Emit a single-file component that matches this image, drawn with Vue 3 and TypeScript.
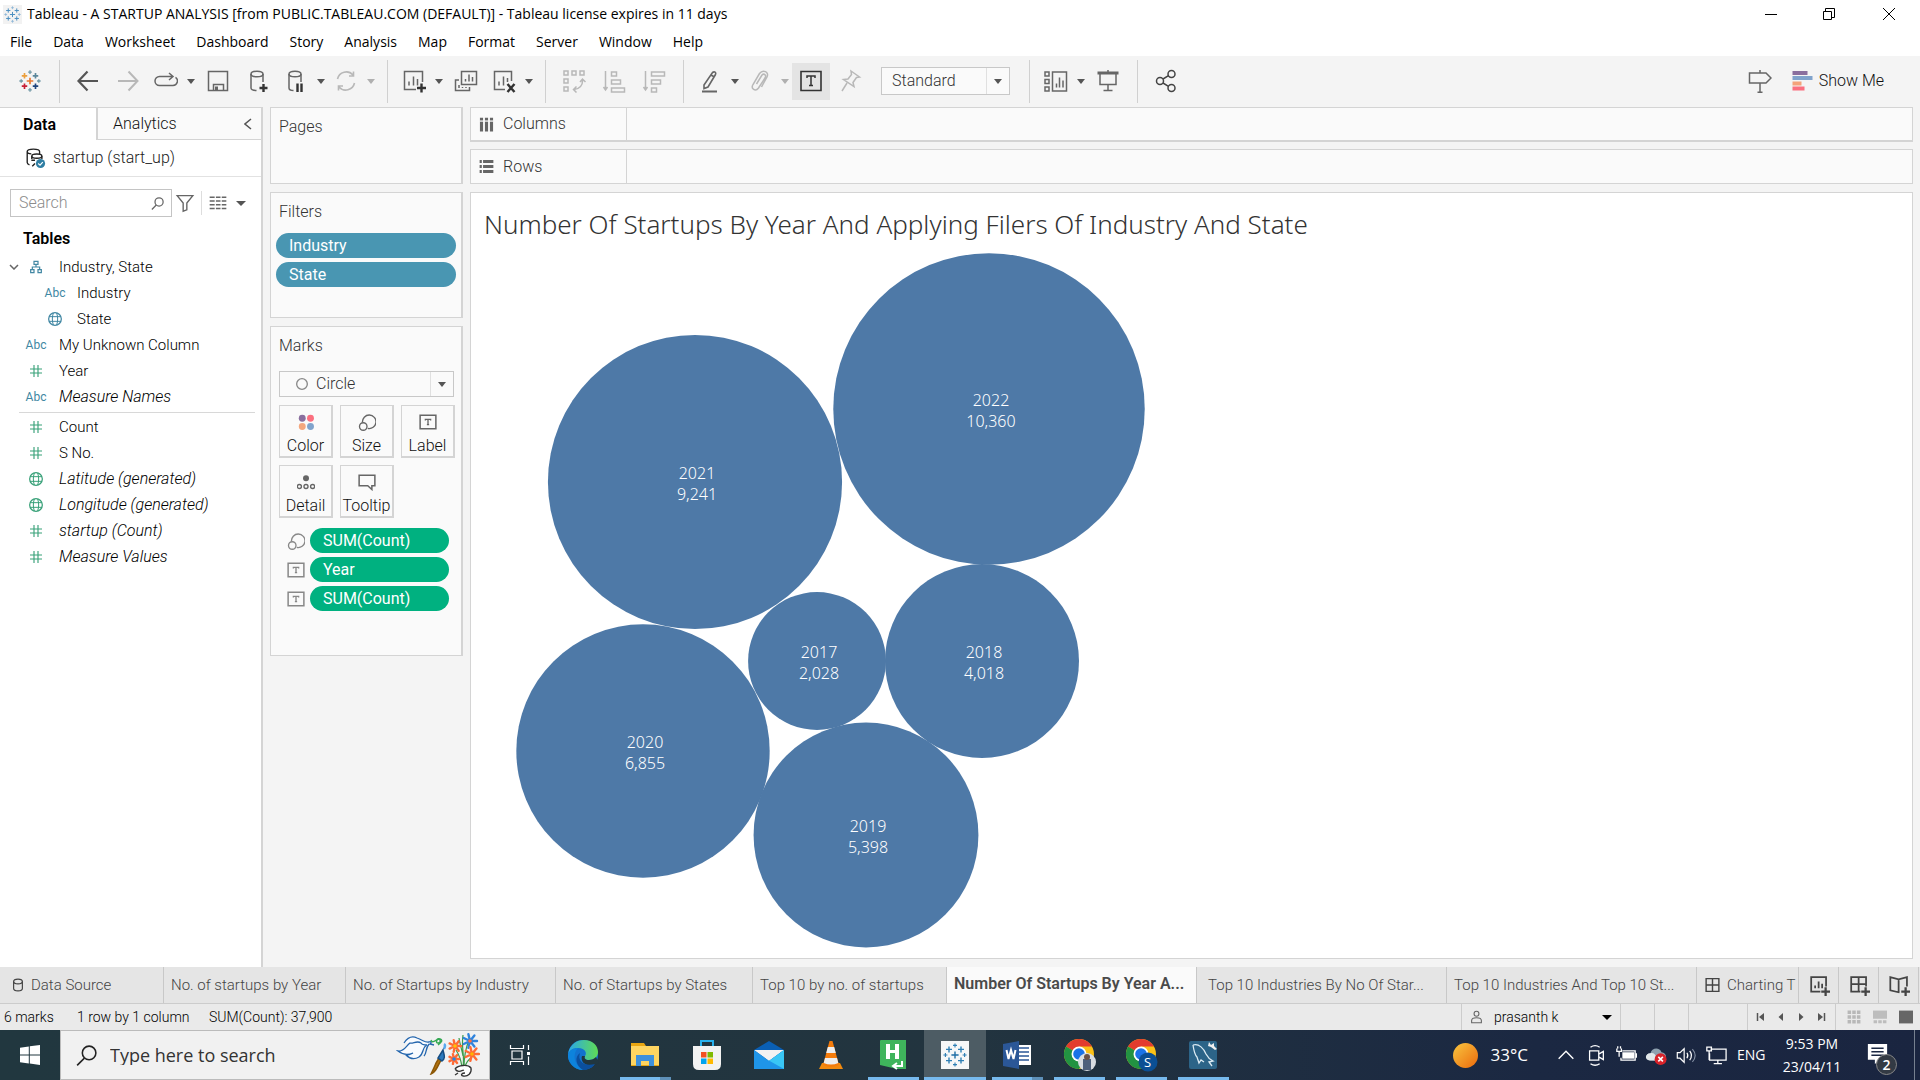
<script setup lang="ts">
import { ref } from 'vue'

interface Tool { icon: string; label: string; menu?: boolean; dim?: boolean; on?: boolean }
interface Field { icon: string; name: string; tone: 'blue' | 'green'; italic?: boolean; child?: boolean; open?: boolean }
interface Bubble { year: string; count: number; x: number; y: number }
interface Sheet { name: string; icon?: string; size: string }
interface App { icon: string; label: string; running?: boolean; stacked?: boolean; active?: boolean }

const plus = (x: number, y: number, arm: number, color: string, w = 1) =>
  `<path d="M${x - arm} ${y}H${x + arm}M${x} ${y - arm}V${y + arm}" stroke="${color}" stroke-width="${w}"/>`

const spark = (c: string[], w: number) =>
  plus(12, 12, 3.6, c[0], w) + plus(6, 6.4, 3, c[1], w) + plus(18, 6.4, 3, c[2], w) + plus(6, 17.6, 3, c[3], w) +
  plus(18, 17.6, 3, c[4], w) + plus(12, 2.4, 2, c[5], w * 0.8) + plus(12, 21.6, 2, c[5], w * 0.8) +
  plus(2.4, 12, 2, c[5], w * 0.8) + plus(21.6, 12, 2, c[5], w * 0.8)

const petals = (x: number, y: number, r: number, color: string, mid: string) => {
  let d = ''
  for (let i = 0; i < 7; i++) {
    const a = (i * Math.PI * 2) / 7
    d += `M${x} ${y}L${(x + Math.cos(a) * r).toFixed(1)} ${(y + Math.sin(a) * r).toFixed(1)}`
  }
  return `<path d="${d}" stroke="${color}" stroke-width="2.4" stroke-linecap="round"/><circle cx="${x}" cy="${y}" r="1.8" fill="${mid}" stroke="none"/>`
}

const letterT = 'M8.5 10V8.5h7V10M12 8.5v7M10.5 15.5h3'
const chrome = '<circle cx="20" cy="19" r="15" fill="#fbc116"/><path d="M20 19 7 11.500A15 15 0 0 1 33 11.500H20Z" fill="#e33b2e"/><path d="M7 11.500A15 15 0 0 0 20 34l7-11-7-4Z" fill="#229342"/><circle cx="20" cy="19" r="7.500" fill="#fff"/><circle cx="20" cy="19" r="5.800" fill="#1a73e8"/>'

const art: Record<string, string> = {
  logo: spark(['#e8762c', '#eb9f3c', '#5b879b', '#c72035', '#1f457e', '#7199a6'], 1.8),
  logoBlue: spark(['#4b8fc0', '#4b8fc0', '#4b8fc0', '#4b8fc0', '#4b8fc0', '#8ab5d6'], 1.4),
  back: '<path d="M22 12H3M11.500 2.500 2.500 12l9 9.500" stroke="#555" stroke-width="2.200"/>',
  forward: '<path d="M2 12h19M12.500 2.500 21.500 12l-9 9.500" stroke-width="2"/>',
  loop: '<path d="M9 7.500H5.500a4.500 4.500 0 0 0 0 9H19a4.500 4.500 0 0 0 2.500-8.200M9 7.500h9M15 4l4 3.500-4 3.500"/>',
  save: '<path d="M2.500 2.500h19v19h-19ZM7.500 21.500v-6h10v6"/><path d="M9 17.500h3v4H9Z" fill="currentColor" stroke="none"/>',
  dbAdd: '<ellipse cx="11" cy="5" rx="6" ry="2.800"/><path d="M5 5v14c0 1.500 2.500 2.500 5.500 2.500M17 5v8"/><path d="M17.500 15v8M13.500 19h8" stroke="#333" stroke-width="2.400"/>',
  dbPause: '<ellipse cx="11" cy="5" rx="6" ry="2.800"/><path d="M5 5v14c0 1.500 2 2.500 4.500 2.500M17 5v8"/><path d="M13.500 14.500v8.500M17.500 14.500v8.500" stroke="#333" stroke-width="2.400"/>',
  refresh: '<path d="M20.500 14A9 9 0 0 1 5 18M3.500 10A9 9 0 0 1 19 6M19.500 2.500V7H15M4.500 21.500V17H9" stroke-width="1.600"/>',
  sheetAdd: '<path d="M14 20.500H2.500v-18h18V13M7 16.500v-4M11.500 16.500v-9M15.500 16.500V10"/><path d="M19.500 14.500v9M15 19h9" stroke="#333" stroke-width="2.400"/>',
  sheetCopy: '<path d="M7.500 2.500h15v13h-15ZM11.500 12.500V10M15 12.500V5.500M18.500 12.500V8M5 11H1.500v10.500h14V18M5 19v-3M8.500 19v-1M12 19v-1"/>',
  sheetClear: '<path d="M13 20.500H2.500v-18h17V12M7 16.500v-4M11.500 16.500v-9M15.500 13V9"/><path d="m15.500 15 7 8M22.500 15l-7 8" stroke="#333" stroke-width="2.400"/>',
  swap: '<path d="M2 2h4v4H2ZM10 2h4v4h-4ZM18 2h4v4h-4ZM2 10h4v4H2ZM2 18h4v4H2ZM20.500 10.500c.500 6-3 9.500-8.500 10M18 13l2.500-3 3 3M14.500 17.500l-3 3 3 3"/>',
  sortAsc: '<path d="M3.500 2v19M1.500 18l2 3 2-3M9.500 3h5v4h-5ZM9.500 11h9v4h-9ZM9.500 19h13v4h-13Z"/>',
  sortDesc: '<path d="M3.500 2v19M1.500 18l2 3 2-3M9.500 3h13v4h-13ZM9.500 11h9v4h-9ZM9.500 19h5v4h-5Z"/>',
  pen: '<path d="M6 16 14.500 3.500c2-1.500 4 0 3 2L10 18l-4 1.500ZM13 6l3.500 2" stroke-width="1.600"/><path d="M4 22.500h15" stroke-width="2"/>',
  clip: '<path d="m8.500 15 5.500-9c2-2 4.500 0 3.300 2.500L10.500 19c-3 4-8 1-5.500-3.500L11.500 4.500C15 0 21.500 3 19 8l-5.500 10"/>',
  label: '<path d="M2 2.500h20v19H2Z" stroke="#333" stroke-width="1.600"/><path d="M8 9V7h8v2M12 7v9.500M10 16.500h4" stroke="#333" stroke-width="1.500"/>',
  pin: '<path d="m13 2 8.500 6-3 .500-3.500 5 1 4-10.500-7 4.500-.500 3.500-4.500ZM9 14l-5 8"/>',
  cards: '<path d="M1 3h4v4H1ZM1 10.500h4v4H1ZM1 18h4v4H1ZM8.500 3h14v19h-14ZM12.500 18.500v-4M15.500 18.500v-10M19 18.500v-7"/>',
  present: '<path d="M4 5v10.500h16V5M12 1v3M12 15.500V21M7.500 21.500h9"/><path d="M1.500 4h21" stroke-width="3"/>',
  share: '<g stroke="#444"><circle cx="6" cy="12" r="3.500"/><circle cx="17.500" cy="5" r="3.500"/><circle cx="17.500" cy="19" r="3.500"/><path d="m9 10 5.500-3.300M9 14l5.500 3.300"/></g>',
  guide: '<path d="M12 1v2.500M12 14v9M9.500 23.200h5M1.500 4H18l5 5-5 5H1.500Z"/>',
  bars: '<g stroke="none"><path d="M1.500 2h15v4h-15Z" fill="#8a6f9e"/><path d="M1.500 7h20v4h-20Z" fill="#80a3cc"/><path d="M1.500 12.500h9v4h-9Z" fill="#f4a27a"/><path d="M1.500 17.500h12v4h-12Z" fill="#fb6f7f"/></g>',
  source: '<path d="M17 8V5c0-3.500-13.500-3.500-13.500 0v12c0 1.500 1 2 2.500 2.500M3.500 5c0 2 3 2.500 4.500 2.500"/><ellipse cx="14" cy="10" rx="5.500" ry="2.300"/><path d="M8.500 10v3M19.500 10v3M8 14.500h4M12 18l-3 3" /><circle cx="18" cy="18" r="5" fill="#2f7ea3" stroke="none"/><path d="m15.500 18 2 1.800 3-3.300" stroke="#fff" stroke-width="1.300"/>',
  search: '<circle cx="14.500" cy="9.500" r="6.500"/><path d="M10 14.500 3 21.500"/>',
  funnel: '<path d="M3.500 4h17L14 12v7.500l-4 1.500v-9Z"/>',
  list: '<path d="M2 5h6M2 9.500h6M2 14h6M2 18.500h6M9.500 5h5.500M9.500 9.500h5.500M9.500 14h5.500M9.500 18.500h5.500M16.500 5H22M16.500 9.500H22M16.500 14H22M16.500 18.500H22" stroke-width="1.800"/>',
  hierarchy: '<path d="M9 3.500h6v4.500H9ZM4 16h5v4.500H4ZM15 16h5v4.500h-5ZM12 8v4M6.500 16v-4h11v4" stroke-width="1.800"/>',
  hash: '<path d="M9 3v18M15 3v18M3 9h18M3 15h18" stroke-width="1.700"/>',
  globe: '<circle cx="12" cy="12" r="9.500" stroke-width="1.900"/><path d="M9.500 3C7.500 9 7.500 15 9.500 21M14.500 3c2 6 2 12 0 18M3 8.500h18M3 15.500h18" stroke-width="1.500"/>',
  circle: '<circle cx="12" cy="12" r="8"/>',
  color: '<g stroke="none"><circle cx="7" cy="7" r="4.600" fill="#8a6f9e"/><circle cx="18" cy="7" r="4.600" fill="#fb6f7f"/><circle cx="7" cy="18" r="4.600" fill="#f4a77e"/><circle cx="18" cy="18" r="4.600" fill="#80a3cc"/></g>',
  size: '<path d="M6 12.500a9 9 0 1 1 7 8"/><circle cx="7" cy="18" r="5"/>',
  text: `<path d="M1.500 3h21v18h-21Z" stroke-width="2"/><path d="${letterT}" stroke-width="1.800"/>`,
  detail: '<circle cx="12" cy="7" r="4" fill="currentColor" stroke="none"/><circle cx="3.200" cy="18" r="2.700"/><circle cx="12" cy="18" r="2.700"/><circle cx="20.800" cy="18" r="2.700"/>',
  tooltip: '<path d="M1.500 3h21v14h-4v5L13 17H1.500Z" stroke-width="2"/>',
  columns: '<path d="M4 1v22M12 1v22M20 1v22" stroke-width="5"/><path d="M1 6.500h22" stroke="#fafafa" stroke-width="2"/>',
  rows: '<path d="M1 4h22M1 12h22M1 20h22" stroke-width="5"/><path d="M5.500 1v22" stroke="#fafafa" stroke-width="2"/>',
  cylinder: '<ellipse cx="12" cy="6" rx="7.500" ry="4"/><path d="M4.500 6v12c0 5.500 15 5.500 15 0V6"/>',
  grid: '<path d="M3 3h18v18H3ZM12 3v18M3 12h18"/>',
  tabSheet: '<path d="M13 19H2.500V2.500h17V13M7 15v-3M11 15V7.500M15 15v-5"/><path d="M19 14v10M14 19h10" stroke-width="2.600"/>',
  tabDash: '<path d="M13 19H2.500V2.500h17V13M11 2.500V19M2.500 10.500h17"/><path d="M19 14v10M14 19h10" stroke-width="2.600"/>',
  tabStory: '<path d="M12 20 1.500 17.500v-15L11 5l9.500-2.500V13M11 5v14.500"/><path d="M19 14v10M14 19h10" stroke-width="2.600"/>',
  person: '<circle cx="12" cy="6" r="4.500"/><path d="M3 22.500v-4c0-7 18-7 18 0v4Z"/>',
  first: '<path d="M5 4v16" stroke-width="3"/><path d="M18 4v16L8 12Z" fill="currentColor" stroke="none"/>',
  prev: '<path d="M16 4v16L7 12Z" fill="currentColor" stroke="none"/>',
  next: '<path d="M8 4v16l9-8Z" fill="currentColor" stroke="none"/>',
  last: '<path d="M19 4v16" stroke-width="3"/><path d="M6 4v16l10-8Z" fill="currentColor" stroke="none"/>',
  viewGrid: '<path d="M1 4h22M1 12h22M1 20h22" stroke="#b8b8b8" stroke-width="6" stroke-dasharray="6 2"/>',
  viewStrip: '<path d="M0 1h24v14H0Z" fill="#bdbdbd" stroke="none"/><path d="M1 20h22" stroke="#bdbdbd" stroke-width="5" stroke-dasharray="6 2"/>',
  viewFull: '<path d="M0 1h24v22H0Z" fill="#666" stroke="none"/>',
  windows: '<path d="m2 4.800 8.800-1.300v8H2ZM11.800 3.300 22 2v9.500H11.800ZM2 12.500h8.800v8L2 19.200ZM11.800 12.500H22V22l-10.200-1.400Z" fill="#fff" stroke="none"/>',
  taskview: '<path d="M2.500 2v3.500h13V2M4 8h10v8H4ZM2.500 22v-3.500h13V22M20.500 2v5M20.500 13.500V22" stroke="#fff" stroke-width="1.200"/><path d="M19 9h3v3h-3Z" fill="#fff" stroke="none"/>',
  doodle: '<path d="M2 19c6 1 8-5 12-8 3 1 7-3 11 0 1 2 3 2 6 2-5 2-3 9-8 12-5 3-10 1-13-2 4 0 5-1 7-2-5 2-10 2-15-2ZM8 11c4-6 9-7 13-5 6 2 8 5 12 4 2-1 3 1 1 2l4 1M33 12c-4 5-2 9-5 12" stroke="#2466ae" stroke-width="1.300" fill="#f8fbff"/><path d="M35 8c1 4 5 0 7-1 3 0 3 4 0 4s-1-5 2-4 2 3-2 6" stroke="#34a853" stroke-width="1.400"/><path d="M48 12c2 1 1 3 0 5" stroke="#59a9ef" stroke-width="2.500"/><path d="m46 21-6 10c-1 3-4 9-5 11 4-1 6-6 10-14Z" fill="#b5730d" stroke="#8c5807"/><path d="m47 18-5 8 4 3c4-3 2-6 1-11Z" fill="#2b79bd" stroke="#154d84"/><path d="M67 3c-2 14 2 20 0 32M60 18c4 6 5 10 6 17M77 24c-4 3-7 6-8 11M73 8c-4 10-5 18-5 27M63 6c1 7 3 12 4 18" stroke="#3d9c4a" stroke-width="1.200"/>' +
    petals(74, 9, 7, '#2f83dd', '#ff7043') + petals(59, 14, 6, '#ff6b35', '#ffc107') + petals(76, 22, 7, '#ff6b35', '#ffb300') + petals(58, 27, 5, '#ff6b35', '#2f83dd') +
    '<path d="M59 37c3-4 13-5 16-1 1 5-3 9-8 8-3-1-1-3 2-3M59 37c3 4 6 2 9 1M62 41l-3 2" stroke="#333" stroke-width="1.300" fill="#fff"/>',
  edge: '<defs><linearGradient id="eg" x1="0" x2="1"><stop stop-color="#2aa7e8"/><stop offset="1" stop-color="#5fdc55"/></linearGradient></defs><circle cx="20" cy="20" r="15" fill="#1272cf"/><path d="M5 19C7 9 14 5 21 5c9 0 14 6 14 12 0 5-4 8-9 8-4 0-5-2-4-4 2-2 1-8-7-8-5 0-8 2-10 6Z" fill="url(#eg)"/><path d="M15 13c-6 6-4 17 5 22-9 0-16-8-15-16 2-4 6-6 10-6Z" fill="#0d83dc"/><path d="M22 21c-1 2 0 4 4 4 3 0 5-1 7-3l3 6-4 2c-9 2-15-3-13-9Z" fill="#21363f"/><path d="M17 18c-3 8 4 14 15 11-3 4-8 6-12 6-7-4-9-13-3-17Z" fill="#0b4f9e"/>',
  explorer: '<path d="M6 8h13l2 3h13v20H6Z" fill="#e9a612"/><path d="M6 11h28v19H6Z" fill="#ffd561"/><path d="M11 31V20h18v11h-5v-5h-8v5Z" fill="#3e90dc"/>',
  store: '<path d="M14 12V6h12v6" fill="none" stroke="#27b1ee" stroke-width="2"/><path d="M6 11h28v18q0 6-6 6H12q-6 0-6-6Z" fill="#f2f2f2"/><path d="M14 17h5.500v5.500H14Z" fill="#f25022"/><path d="M20.500 17H26v5.500h-5.500Z" fill="#7fba00"/><path d="M14 23.500h5.500V29H14Z" fill="#00a4ef"/><path d="M20.500 23.500H26V29h-5.500Z" fill="#ffb900"/>',
  mail: '<path d="M5 15 20 6l15 9v19H5Z" fill="#0a5fb4"/><path d="M5 15h30L20 26Z" fill="#f2f2f2"/><path d="m5 15 15 11 15-11v19H5Z" fill="#1f95e8"/><path d="M35 15v19L18 24.500l2 1.500Z" fill="#39c6f5"/>',
  vlc: '<path d="M11 28h18l3 6H8Z" fill="#f28a0f"/><path d="M18.500 6h3l6.500 24q-8 4-16 0Z" fill="#f57c0b"/><path d="m16.800 12-1.600 6h9.600l-1.600-6Zm-2.800 11-1.300 5q7.300 3 14.600 0L26 23Z" fill="#eee"/>',
  heidi: '<path d="M7 6q0-1 1-1h25v29h-9L7 30Z" fill="#3fb45c"/><path d="M13 9h4v6h5V9h4v15h-4v-6h-5v6h-4Z" fill="#fff"/><path d="M29 26v5h-8m3-3-4 3 4 3" fill="none" stroke="#fff" stroke-width="2"/>',
  tableau: `<path d="M6 6h28v28H6Z" fill="#f5f7f8"/><g transform="translate(8 8)" fill="none">${spark(['#1f6ea5', '#2e7fb4', '#2e7fb4', '#2e7fb4', '#2e7fb4', '#2e7fb4'], 1.4)}</g>`,
  word: '<path d="M20 10h14v20H20Z" fill="#fff"/><path d="M22 13h10M22 17h10M22 21h10M22 25h10" stroke="#2b5797" stroke-width="1.600"/><path d="m6 9 16-3v28L6 31Z" fill="#2b5797"/><path d="m9.500 15 2 9 2.500-9 2.500 9 2-9" fill="none" stroke="#fff" stroke-width="2"/>',
  chromeA: `${chrome}<circle cx="28" cy="27" r="9" fill="#d8dde2"/><path d="M24 35V24h8v11Z" fill="#4e617c"/><circle cx="28" cy="22" r="3" fill="#6b5348"/>`,
  chromeB: `${chrome}<circle cx="27" cy="27" r="9.500" fill="#0b4f94"/>`,
  mysql: '<path d="M6 8q0-2 2-2h24q2 0 2 2v24q0 2-2 2H8q-2 0-2-2Z" fill="#2c6488"/><path d="M10 10c6-2 11 4 13 9 2 4 3 5 7 7l-4 1 3 4M10 10c1 7 2 10 4 12l2 6 2-3 3 2" fill="none" stroke="#dcebf3" stroke-width="1.300"/><path d="m26 7 2 3 3-2 0 3 3 3-2 1-4-3-3-1Z" fill="#eee"/>',
  chevron: '<path d="m4 16 8-8 8 8" stroke-width="1.500"/>',
  meet: '<path d="M5 7.500h10v10H5ZM15 11l5-3v9l-5-3M6 3.500c3-2 7-2 10 0M6 21.500c3 2 7 2 10 0" stroke-width="1.400"/>',
  battery: '<path d="M8 7.500h14v10H6.500V15M23.500 10v5M2 5v3h5V5M3 2.500V5M6 2.500V5M4.500 8v6" stroke-width="1.400"/><path d="M8 9h13v7H8Z" fill="#fff" stroke="none"/>',
  cloud: '<path d="M6 18c-6-1-6-8 0-8 1-6 10-7 12-1 6 0 7 9 0 9Z" fill="#8fa1af" stroke="none"/><path d="M5 18c-6-1-5-8 1-8 4-1 8 3 5 8Z" fill="#e2e7ea" stroke="none"/><circle cx="17" cy="16.500" r="6.500" fill="#d8232a" stroke="none"/><path d="m14.500 14 5 5m0-5-5 5" stroke="#fff" stroke-width="1.700"/>',
  sound: '<path d="M2.500 9.500h3L10 5v15l-4.500-4.500h-3ZM13 9.500q2 3 0 6M16 7.500q4 5 0 10" stroke-width="1.300"/><path d="M19 5.500q6 7 0 14" stroke="#8591a4" stroke-width="1.200"/>',
  monitor: '<path d="M6 5.500h17v12H5V10M14 17.500v4M9.500 21.500h9M2 3.500h5v4H2ZM4.500 7.500v10" stroke-width="1.400"/>',
  note: '<path d="M1 1h22v18h-8l-6 5v-5H1Z" fill="#fff" stroke="none"/><path d="M5 6h14M5 10h14M5 14h14" stroke="#1b2742" stroke-width="1.600"/>',
}

const menus = ['File', 'Data', 'Worksheet', 'Dashboard', 'Story', 'Analysis', 'Map', 'Format', 'Server', 'Window', 'Help']

const groups: Tool[][] = [
  [
    { icon: 'back', label: 'Undo' }, { icon: 'forward', label: 'Redo', dim: true }, { icon: 'loop', label: 'Replay', menu: true },
    { icon: 'save', label: 'Save' }, { icon: 'dbAdd', label: 'New data source' }, { icon: 'dbPause', label: 'Pause updates', menu: true },
    { icon: 'refresh', label: 'Run update', menu: true, dim: true },
  ],
  [{ icon: 'sheetAdd', label: 'New worksheet', menu: true }, { icon: 'sheetCopy', label: 'Duplicate' }, { icon: 'sheetClear', label: 'Clear sheet', menu: true }],
  [{ icon: 'swap', label: 'Swap', dim: true }, { icon: 'sortAsc', label: 'Sort ascending', dim: true }, { icon: 'sortDesc', label: 'Sort descending', dim: true }],
  [{ icon: 'pen', label: 'Highlight', menu: true }, { icon: 'clip', label: 'Group', menu: true, dim: true }, { icon: 'label', label: 'Show mark labels', on: true }, { icon: 'pin', label: 'Fix axes', dim: true }],
  [{ icon: 'cards', label: 'Show cards', menu: true }, { icon: 'present', label: 'Presentation mode' }],
  [{ icon: 'share', label: 'Share' }],
]

const dimensions: Field[] = [
  { icon: 'hierarchy', name: 'Industry, State', tone: 'blue', open: true },
  { icon: 'abc', name: 'Industry', tone: 'blue', child: true },
  { icon: 'globe', name: 'State', tone: 'blue', child: true },
  { icon: 'abc', name: 'My Unknown Column', tone: 'blue' },
  { icon: 'hash', name: 'Year', tone: 'green' },
  { icon: 'abc', name: 'Measure Names', tone: 'blue', italic: true },
]
const measures: Field[] = [
  { icon: 'hash', name: 'Count', tone: 'green' },
  { icon: 'hash', name: 'S No.', tone: 'green' },
  { icon: 'globe', name: 'Latitude (generated)', tone: 'green', italic: true },
  { icon: 'globe', name: 'Longitude (generated)', tone: 'green', italic: true },
  { icon: 'hash', name: 'startup (Count)', tone: 'green', italic: true },
  { icon: 'hash', name: 'Measure Values', tone: 'green', italic: true },
]

const filters = ['Industry', 'State']
const markCards = [['color', 'Color'], ['size', 'Size'], ['text', 'Label'], ['detail', 'Detail'], ['tooltip', 'Tooltip']]
const encodings = [['size', 'SUM(Count)'], ['text', 'Year'], ['text', 'SUM(Count)']]

const bubbles: Bubble[] = [
  { year: '2022', count: 10360, x: 518, y: 165 },
  { year: '2021', count: 9241, x: 224, y: 238 },
  { year: '2018', count: 4018, x: 511, y: 417 },
  { year: '2017', count: 2028, x: 346, y: 417 },
  { year: '2020', count: 6855, x: 172, y: 507 },
  { year: '2019', count: 5398, x: 395, y: 591 },
]
const radius = (count: number) => Math.sqrt(count) * 1.53

const sheets: Sheet[] = [
  { name: 'Data Source', icon: 'cylinder', size: 'w163' },
  { name: 'No. of startups by Year', size: 'w182' },
  { name: 'No. of Startups by Industry', size: 'w210' },
  { name: 'No. of Startups by States', size: 'w197' },
  { name: 'Top 10 by no. of startups', size: 'w194' },
  { name: 'Number Of Startups By Year A...', size: 'w250' },
  { name: 'Top 10 Industries By No Of Star...', size: 'w250' },
  { name: 'Top 10 Industries And Top 10 St...', size: 'w250' },
  { name: 'Charting T', icon: 'grid', size: 'rest' },
]
const current = ref(5)

const apps: App[] = [
  { icon: 'edge', label: 'Edge' },
  { icon: 'explorer', label: 'File Explorer', running: true, stacked: true },
  { icon: 'store', label: 'Store' },
  { icon: 'mail', label: 'Mail' },
  { icon: 'vlc', label: 'VLC' },
  { icon: 'heidi', label: 'HeidiSQL', running: true },
  { icon: 'tableau', label: 'Tableau', running: true, active: true },
  { icon: 'word', label: 'Word', running: true, stacked: true },
  { icon: 'chromeA', label: 'Chrome', running: true },
  { icon: 'chromeB', label: 'Chrome profile S', running: true },
  { icon: 'mysql', label: 'MySQL Workbench', running: true },
]
const tray = ['chevron', 'meet', 'battery', 'cloud', 'sound', 'monitor']
const fit = ref('Standard')
const markType = ref('Circle')
const query = ref('')
const webQuery = ref('')
</script>

<template>
  <div class="desktop">
    <header class="titlebar">
      <svg class="app-icon" viewBox="0 0 24 24" v-html="art.logoBlue" />
      <h1>Tableau - A STARTUP ANALYSIS [from PUBLIC.TABLEAU.COM (DEFAULT)] - Tableau license expires in 11 days</h1>
      <div class="window-controls">
        <button aria-label="Minimize"><svg viewBox="0 0 12 12"><path d="M0 6.500h12" /></svg></button>
        <button aria-label="Restore"><svg viewBox="0 0 12 12"><path d="M.5 3.500h8v8h-8ZM2.500 3V.5h9v9H9" /></svg></button>
        <button aria-label="Close"><svg viewBox="0 0 12 12"><path d="m0 0 12 12M12 0 0 12" /></svg></button>
      </div>
    </header>

    <nav class="menubar">
      <button v-for="m in menus" :key="m">{{ m }}</button>
    </nav>

    <div class="toolbar">
      <button class="start" aria-label="Start page"><svg class="icon" viewBox="0 0 24 24" v-html="art.logo" /></button>
      <div v-for="(g, gi) in groups" :key="gi" class="group">
        <button v-for="t in g" :key="t.icon" class="tool" :class="{ split: t.menu, dim: t.dim, on: t.on }" :aria-label="t.label">
          <svg class="icon" viewBox="0 0 24 24" v-html="art[t.icon]" />
          <i v-if="t.menu" class="caret" />
        </button>
        <div v-if="gi === 3" class="picker fit">
          <select v-model="fit" aria-label="Fit"><option>Standard</option></select>
          <span class="drop"><i class="caret" /></span>
        </div>
      </div>
      <div class="spacer" />
      <button class="tool" aria-label="Data guide"><svg class="icon" viewBox="0 0 24 24" v-html="art.guide" /></button>
      <button class="show-me"><svg class="icon" viewBox="0 0 24 24" v-html="art.bars" />Show Me</button>
    </div>

    <main class="workspace">
      <aside class="data-pane">
        <div class="pane-tabs">
          <button class="selected">Data</button>
          <button class="other">Analytics</button>
          <button class="collapse" aria-label="Collapse"><svg viewBox="0 0 8 12"><path d="M7 1 1 6l6 5" /></svg></button>
        </div>
        <div class="datasource"><svg viewBox="0 0 24 24" v-html="art.source" />startup (start_up)</div>
        <div class="search-row">
          <label class="search">
            <input v-model="query" type="text" placeholder="Search" aria-label="Search fields">
            <svg viewBox="0 0 24 24" v-html="art.search" />
          </label>
          <button class="filter" aria-label="Filter"><svg viewBox="0 0 24 24" v-html="art.funnel" /></button>
          <button class="view" aria-label="View"><svg viewBox="0 0 24 24" v-html="art.list" /><i class="caret" /></button>
        </div>
        <h2>Tables</h2>
        <ul v-for="(list, li) in [dimensions, measures]" :key="li" class="fields">
          <li v-for="f in list" :key="f.name" :class="[f.tone, { italic: f.italic, child: f.child }]">
            <span class="twist"><svg v-if="f.open" viewBox="0 0 10 6"><path d="m1 1 4 4 4-4" /></svg></span>
            <span v-if="f.icon === 'abc'" class="abc">Abc</span>
            <span v-else class="glyph"><svg viewBox="0 0 24 24" v-html="art[f.icon]" /></span>
            <span>{{ f.name }}</span>
          </li>
        </ul>
      </aside>

      <section class="cards">
        <div class="card pages"><h3>Pages</h3></div>
        <div class="card filters">
          <h3>Filters</h3>
          <button v-for="f in filters" :key="f" class="pill blue-pill">{{ f }}</button>
        </div>
        <div class="card marks">
          <h3>Marks</h3>
          <div class="picker mark-type">
            <svg class="ring" viewBox="0 0 24 24" v-html="art.circle" />
            <select v-model="markType" aria-label="Mark type"><option>Circle</option></select>
            <span class="drop"><i class="caret" /></span>
          </div>
          <div class="mark-grid">
            <button v-for="m in markCards" :key="m[1]"><svg viewBox="0 0 24 24" v-html="art[m[0]]" />{{ m[1] }}</button>
          </div>
          <div v-for="(e, i) in encodings" :key="i" class="encoding">
            <svg viewBox="0 0 24 24" v-html="art[e[0]]" />
            <button class="pill green-pill">{{ e[1] }}</button>
          </div>
        </div>
      </section>

      <section class="view-area">
        <div class="shelf"><span><svg viewBox="0 0 24 24" v-html="art.columns" />Columns</span></div>
        <div class="shelf"><span><svg viewBox="0 0 24 24" v-html="art.rows" />Rows</span></div>
        <div class="canvas">
          <h2>Number Of Startups By Year And Applying Filers Of Industry And State</h2>
          <svg class="chart" role="img" aria-label="Startups by year">
            <g v-for="b in bubbles" :key="b.year">
              <circle :cx="b.x" :cy="b.y" :r="radius(b.count)" />
              <text :x="b.x + 2" :y="b.y - 3">{{ b.year }}</text>
              <text :x="b.x + 2" :y="b.y + 18">{{ b.count.toLocaleString('en-US') }}</text>
            </g>
          </svg>
        </div>
      </section>
    </main>

    <nav class="sheet-tabs">
      <button v-for="(s, i) in sheets" :key="s.name" :class="[s.size, { current: i === current, after: i === current + 1 }]" @click="current = i">
        <svg v-if="s.icon" viewBox="0 0 24 24" v-html="art[s.icon]" />{{ s.name }}
      </button>
      <button v-for="n in ['tabSheet', 'tabDash', 'tabStory']" :key="n" class="add" :aria-label="n"><svg viewBox="0 0 24 24" v-html="art[n]" /></button>
    </nav>

    <footer class="status">
      <span class="marks-count">6 marks</span>
      <span class="shape">1 row by 1 column</span>
      <span>SUM(Count): 37,900</span>
      <div class="spacer" />
      <button class="user"><svg viewBox="0 0 24 24" v-html="art.person" /><span>prasanth k</span><i class="caret" /></button>
      <div class="cell" /><div class="cell" /><div class="cell wide" />
      <div class="pager">
        <button v-for="n in ['first', 'prev', 'next', 'last']" :key="n" :aria-label="n"><svg viewBox="0 0 24 24" v-html="art[n]" /></button>
      </div>
      <div class="views">
        <button v-for="n in ['viewGrid', 'viewStrip', 'viewFull']" :key="n" :aria-label="n"><svg viewBox="0 0 24 24" v-html="art[n]" /></button>
      </div>
    </footer>

    <div class="taskbar">
      <button class="win" aria-label="Start"><svg viewBox="0 0 24 24" v-html="art.windows" /></button>
      <label class="web-search">
        <svg class="lens" viewBox="0 0 24 24" v-html="art.search" />
        <input v-model="webQuery" type="text" placeholder="Type here to search" aria-label="Type here to search">
        <svg class="doodle" viewBox="0 0 84 46" v-html="art.doodle" />
      </label>
      <button class="taskview" aria-label="Task view"><svg viewBox="0 0 24 24" v-html="art.taskview" /></button>
      <button v-for="a in apps" :key="a.label" class="app" :class="{ running: a.running, stacked: a.stacked, active: a.active }" :aria-label="a.label">
        <svg viewBox="0 0 40 40" v-html="art[a.icon]" />
        <span v-if="a.icon === 'chromeB'" class="initial">S</span>
      </button>
      <div class="spacer" />
      <button class="weather"><i class="sun" />33°C</button>
      <button v-for="t in tray" :key="t" class="tray" :aria-label="t"><svg viewBox="0 0 24 24" v-html="art[t]" /></button>
      <button class="lang">ENG</button>
      <button class="clock"><span>9:53 PM</span><span>23/04/11</span></button>
      <button class="notes" aria-label="Notifications"><svg viewBox="0 0 24 24" v-html="art.note" /><span class="badge">2</span></button>
      <div class="peek" />
    </div>
  </div>
</template>

<style>
html, body { margin: 0; }
</style>

<style scoped>
.desktop {
  --line: #d4d4d4;
  display: flex;
  flex-direction: column;
  min-height: 100vh;
  background: #f4f4f4;
  color: #000;
  font: 300 15px/20px Roboto, "Liberation Sans", sans-serif;
  overflow: hidden;
}
.desktop *, .desktop { box-sizing: border-box; }
button, input, select { font: inherit; color: inherit; background: none; border: 0; padding: 0; margin: 0; border-radius: 0; outline: 0; }
button { display: flex; align-items: center; white-space: nowrap; flex: none; }
svg { display: block; flex: none; fill: none; stroke: currentColor; stroke-width: 1.5; }
h1, h2, h3, ul { margin: 0; padding: 0; font-weight: 300; list-style: none; }
.spacer { flex: 1; }
.caret { flex: none; width: 0; height: 0; border: 4px solid transparent; border-top: 5px solid #555; border-bottom: 0; }

.titlebar { display: flex; align-items: center; height: 28px; background: #fff; padding-left: 3px; }
.app-icon { width: 19px; height: 19px; background: #f2f2f2; padding: 1px; margin-right: 5px; }
h1 { flex: 1; min-width: 0; overflow: hidden; white-space: nowrap; font: 400 14px/20px "Open Sans", sans-serif; }
.window-controls { display: flex; }
.window-controls button { width: 58px; height: 28px; justify-content: center; }
.window-controls button:last-child { width: 62px; }
.window-controls svg { width: 12px; height: 12px; stroke-width: 1; }

.menubar { display: flex; height: 28px; background: #fff; padding-bottom: 1px; }
.menubar button { padding: 0 11px 0 10px; font: 400 14px/20px "Open Sans", sans-serif; }

.toolbar { display: flex; align-items: center; height: 51px; padding-bottom: 1px; color: #666; }
.start { width: 59px; height: 48px; justify-content: center; }
.icon { width: 24px; height: 24px; }
.start .icon { width: 22px; height: 24px; }
.group { display: flex; align-items: center; height: 43px; padding: 0 9px 0 8px; border-left: 1px solid #d0d0d0; }
.tool { width: 40px; height: 37px; justify-content: center; }
.tool.split { width: 50px; padding-left: 6px; justify-content: flex-start; }
.split .caret { margin-left: 9px; }
.dim { color: #b8b8b8; }
.dim .caret { border-top-color: #b0b0b0; }
.tool.on { width: 38px; background: #e4e4e4; }
.picker { position: relative; display: flex; align-items: center; background: #fafafa; border: 1px solid #c8c8c8; color: #333; }
.picker select { appearance: none; width: 100%; height: 100%; }
.drop { position: absolute; top: 0; right: 0; bottom: 0; width: 23px; display: flex; align-items: center; justify-content: center; border-left: 1px solid #e0e0e0; pointer-events: none; }
.fit { width: 129px; height: 28px; margin: 0 10px 0 11px; font-size: 16px; }
.fit select { padding-left: 10px; }
.show-me { gap: 4px; margin: 0 36px 0 11px; font-size: 16px; color: #111; }

.workspace { flex: 1; display: flex; min-height: 0; }
.data-pane { flex: none; width: 263px; background: #fff; border-right: 2px solid var(--line); border-top: 1px solid var(--line); }
.pane-tabs { display: flex; height: 32px; font-size: 16px; }
.selected { width: 96px; padding: 1px 0 0 23px; font-weight: 600; }
.other { flex: 1; padding: 1px 0 0 15px; border-left: 2px solid var(--line); border-bottom: 1px solid var(--line); background: #fafafa; color: #111; }
.collapse { width: 26px; padding-left: 9px; border-bottom: 1px solid var(--line); background: #fafafa; color: #555; }
.collapse svg { width: 8px; height: 12px; }
.datasource { display: flex; align-items: center; gap: 7px; height: 37px; padding-left: 24px; color: #222; border-bottom: 1px solid #e2e2e2; font-size: 16px; }
.datasource svg { width: 22px; height: 22px; }
.search-row { display: flex; align-items: center; height: 52px; padding-left: 10px; color: #666; }
.search { display: flex; align-items: center; width: 162px; height: 28px; border: 1px solid #c4c4c4; padding: 0 6px 0 8px; background: #fff; }
.search input { flex: 1; min-width: 0; font-size: 16px; color: #333; }
.search input::placeholder { color: #8c8c8c; opacity: 1; }
.search svg { width: 15px; height: 15px; stroke-width: 2; }
.filter { width: 30px; height: 24px; padding-left: 2px; border-right: 1px solid #ddd; }
.filter svg { width: 22px; height: 22px; }
.view { padding-left: 6px; gap: 8px; }
.view svg { width: 20px; height: 20px; }
.view .caret { border-width: 5px 5px 0; }
.data-pane h2 { padding-left: 23px; font: 600 16px/20px Roboto, sans-serif; margin-bottom: 5px; }
.fields li { display: flex; align-items: center; height: 26px; }
.fields + .fields { margin: 2px 6px 0 19px; border-top: 1px solid #d8d8d8; padding-top: 1px; }
.twist { flex: none; width: 22px; padding-left: 9px; color: #666; }
.fields + .fields .twist { width: 3px; padding: 0; }
.twist svg { width: 10px; height: 6px; }
.child .twist { width: 41px; }
.glyph, .abc { flex: none; width: 28px; display: flex; justify-content: center; margin-right: 9px; }
.child .glyph, .child .abc { margin-right: 8px; }
.glyph svg { width: 16px; height: 16px; }
.abc { font-size: 12px; font-weight: 400; }
.blue .glyph, .blue .abc { color: #4187a3; }
.green .glyph { color: #39a179; }
.italic { font-style: italic; font-size: 16px; }
.italic .abc { font-style: normal; }

.cards { flex: none; width: 193px; margin: 0 7px; display: flex; flex-direction: column; gap: 8px; }
.card { background: #fafafa; border: 1px solid var(--line); border-right-width: 2px; }
.card h3 { padding: 8px 0 0 8px; font-size: 16px; line-height: 21px; color: #333; }
.pages { height: 77px; }
.filters { height: 126px; }
.marks { height: 330px; }
.pill { height: 25px; border-radius: 13px; color: #fff; font-size: 16px; font-weight: 400; }
.blue-pill { width: 180px; margin: 0 0 4px 5px; padding-left: 13px; background: #4996b2; }
.filters h3 { margin-bottom: 11px; }
.marks h3 { margin-bottom: 15px; }
.mark-type { width: 175px; height: 26px; margin-left: 8px; }
.mark-type select { padding-left: 36px; font-size: 16px; }
.ring { position: absolute; left: 14px; width: 16px; height: 16px; stroke-width: 2; color: #888; }
.mark-grid { display: grid; grid-template-columns: repeat(3, 54px); gap: 7px; margin: 8px 0 10px 8px; width: 176px; }
.mark-grid button { flex-direction: column; gap: 5px; height: 53px; padding-top: 7px; border: 1px solid var(--line); border-width: 1px 2px 2px 1px; color: #111; font-size: 16px; }
.mark-grid svg { width: 18px; height: 18px; stroke-width: 1.800; color: #666; }
.encoding { display: flex; align-items: center; gap: 5px; padding-left: 16px; margin-bottom: 4px; color: #888; }
.encoding svg { width: 18px; height: 18px; stroke-width: 1.800; }
.green-pill { width: 139px; padding-left: 13px; background: #00b180; }

.view-area { flex: 1; min-width: 0; margin: 0 7px 8px 0; display: flex; flex-direction: column; gap: 8px; }
.shelf { height: 35px; background: #fafafa; border: 1px solid var(--line); border-bottom-width: 2px; }
.shelf + .shelf { border-bottom-width: 1px; margin-top: -1px; height: 35px; }
.shelf span { display: flex; align-items: center; gap: 9px; width: 156px; height: 100%; padding-left: 8px; border-right: 1px solid var(--line); color: #333; font-size: 16px; }
.shelf svg { width: 15px; height: 15px; color: #666; }
.canvas { flex: 1; display: flex; flex-direction: column; background: #fff; border: 1px solid var(--line); }
.canvas h2 { height: 51px; padding: 14px 0 0 13px; font: 300 26px/34px "Noto Sans", sans-serif; color: #333; white-space: nowrap; overflow: hidden; }
.chart { flex: 1; width: 100%; stroke: none; }
.chart circle { fill: #4e79a7; }
.chart text { fill: #fff; text-anchor: middle; font: 300 16px "Noto Sans", sans-serif; }

.sheet-tabs { display: flex; height: 37px; background: #e5e5e5; border-bottom: 1px solid #ccc; color: #444; }
.sheet-tabs button { padding: 0 0 1px 7px; border-right: 1px solid #c8c8c8; overflow: hidden; gap: 6px; }
.sheet-tabs svg { width: 14px; height: 16px; stroke-width: 2; }
.sheet-tabs .current { background: #fafafa; font-weight: 600; color: #4a4a4a; font-size: 16px; padding-bottom: 2px; }
.sheet-tabs .after { padding-left: 11px; }
.w163 { width: 164px; }
.w182 { width: 182px; }
.w210 { width: 210px; }
.w197 { width: 197px; }
.w194 { width: 194px; }
.w250 { width: 250px; }
.sheet-tabs .w163 { padding-left: 11px; }
.sheet-tabs .rest { flex: 1 1 0; min-width: 0; }
.sheet-tabs .rest svg { width: 17px; height: 18px; }
.sheet-tabs .add { width: 40px; padding: 0 0 0 10px; }
.sheet-tabs .add:last-child { margin-right: 1px; }
.sheet-tabs .add svg { width: 21px; height: 21px; }

.status { display: flex; align-items: center; height: 26px; background: #eaeaea; padding-left: 4px; font-size: 14px; color: #000; }
.marks-count { width: 73px; }
.shape { width: 132px; }
.user { width: 159px; height: 26px; border-left: 1px solid #ccc; padding: 0 8px; }
.user svg { width: 13px; height: 18px; color: #666; stroke-width: 2; margin-right: 11px; }
.user span { flex: 1; text-align: left; }
.user .caret { border-top-color: #000; border-width: 5px 5px 0; }
.cell { width: 34px; height: 26px; border-left: 1px solid #ccc; }
.cell.wide { width: 59px; }
.pager { display: flex; align-items: center; width: 88px; height: 26px; padding-left: 3px; border-left: 1px solid #ccc; color: #555; }
.pager button { width: 20px; justify-content: center; }
.pager svg { width: 12px; height: 12px; }
.views { display: flex; align-items: center; gap: 12px; height: 26px; width: 85px; padding-left: 11px; border-left: 1px solid #ccc; }
.views svg { width: 14px; height: 14px; }

.taskbar { display: flex; height: 50px; background: linear-gradient(90deg, #21373f 0%, #22343f 50%, #1b2842 80%, #1a2540 100%); color: #fff; font-family: "Open Sans", sans-serif; font-weight: 400; }
.win { width: 60px; justify-content: center; }
.win svg { width: 24px; height: 24px; }
.web-search { display: flex; align-items: center; width: 430px; background: #f1f1f1; border: 1px solid #bbb; padding: 0 9px 0 13px; color: #222; }
.lens { width: 25px; height: 25px; }
.web-search input { flex: 1; min-width: 0; margin-left: 11px; font-size: 18px; }
.web-search input::placeholder { color: #333; opacity: 1; }
.doodle { width: 84px; height: 46px; }
.taskview { width: 62px; padding-right: 2px; justify-content: center; }
.taskview svg { width: 24px; height: 24px; }
.app { position: relative; width: 62px; justify-content: center; }
.app svg { width: 40px; height: 40px; stroke: none; }
.active { background: #4d5c64; }
.running::after { content: ""; position: absolute; left: 6px; right: 5px; bottom: 0; height: 3px; background: #76b9ed; }
.stacked::after { background: linear-gradient(90deg, #76b9ed 40px, #5e90b8 40px); }
.active::after { left: 0; right: 0; }
.initial { position: absolute; left: 34px; top: 22px; font-size: 13px; line-height: 20px; }
.weather { gap: 13px; margin-right: 23px; font-size: 17px; }
.sun { width: 25px; height: 25px; border-radius: 50%; background: linear-gradient(135deg, #f8c640, #ec6a0c); }
.tray { width: 30px; justify-content: center; }
.tray svg { width: 22px; height: 24px; }
.lang { width: 47px; padding-left: 6px; font-size: 14px; }
.clock { width: 68px; flex-direction: column; justify-content: center; font-size: 14px; line-height: 23px; }
.notes { position: relative; width: 68px; padding: 0 0 4px 21px; }
.notes svg { width: 21px; height: 21px; }
.badge { position: absolute; left: 30px; top: 24px; width: 21px; height: 21px; border-radius: 50%; border: 1px solid #888; background: #333a44; font-size: 14px; font-weight: 600; line-height: 19px; text-align: center; }
.peek { width: 6px; border-left: 1px solid #76808f; }
</style>
